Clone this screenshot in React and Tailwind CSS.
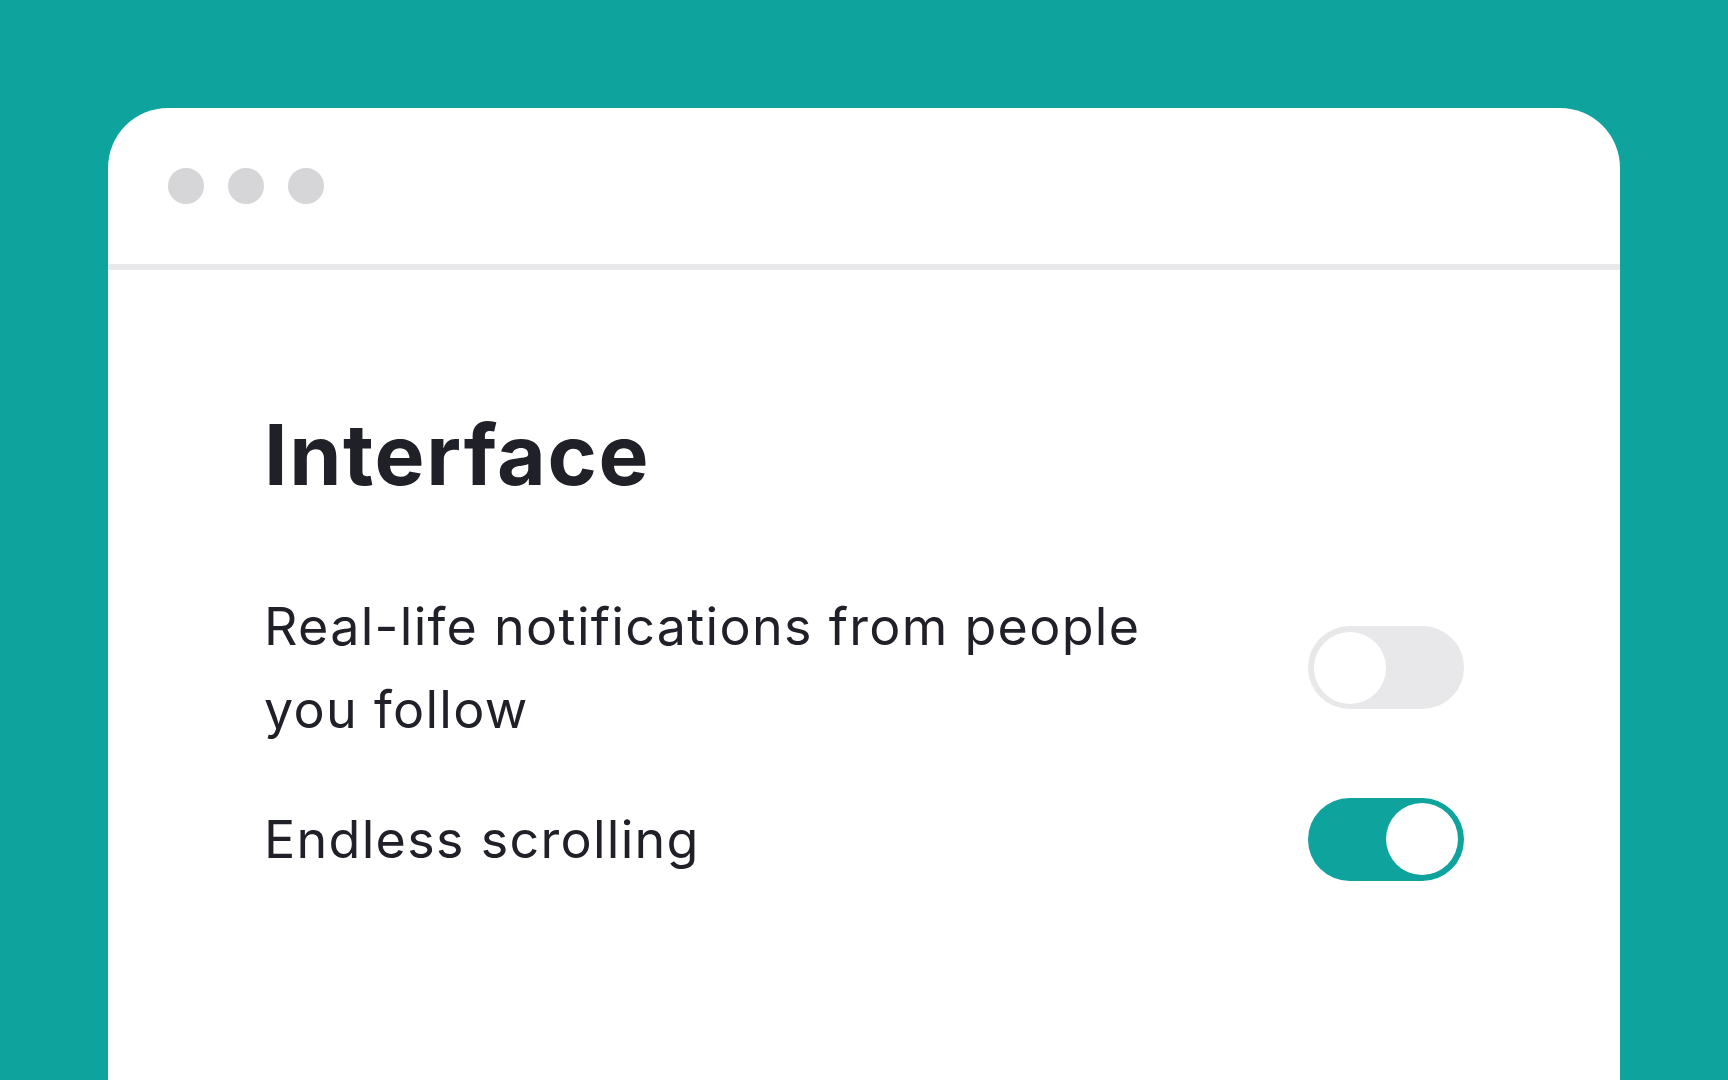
import React, { useState } from "react";

const Toggle = ({ on, onChange }) => {
  return (
    <button
      type="button"
      onClick={onChange}
      className={`flex h-[83px] w-[156px] shrink-0 items-center rounded-full p-[6px] ${
        on ? "justify-end bg-[#0fa39e]" : "justify-start bg-[#e8e8ea]"
      }`}
    >
      <span className="block h-[72px] w-[72px] rounded-full bg-white" />
    </button>
  );
};

export default function App() {
  const [realLife, setRealLife] = useState(false);
  const [endless, setEndless] = useState(true);

  return (
    <div
      className="flex h-screen flex-col overflow-hidden bg-[#0fa39e] px-[108px] pt-[108px]"
      style={{ fontFamily: "Inter, 'Noto Sans', sans-serif" }}
    >
      <div className="flex flex-1 flex-col rounded-t-[60px] bg-white">
        {/* window bar */}
        <div className="flex h-[156px] items-center gap-[24px] pl-[60px]">
          <span className="h-[36px] w-[36px] rounded-full bg-[#d6d6d9]" />
          <span className="h-[36px] w-[36px] rounded-full bg-[#d6d6d9]" />
          <span className="h-[36px] w-[36px] rounded-full bg-[#d6d6d9]" />
        </div>
        <div className="h-[6px] bg-[#e8e8ea]" />

        <div className="px-[156px] pt-[135px] text-[#202028]">
          <h1 className="text-[84px] font-bold leading-[1.2] tracking-[0.019em]">
            Interface
          </h1>

          <div className="mt-[79px] flex flex-col gap-[47px]">
            <div className="flex items-center justify-between">
              <p className="max-w-[910px] text-[52px] leading-[83px] tracking-[0.025em]">
                Real-life notifications from people you follow
              </p>
              <Toggle on={realLife} onChange={() => setRealLife(!realLife)} />
            </div>
            <div className="flex items-center justify-between">
              <p className="text-[52px] leading-[83px] tracking-[0.025em]">
                Endless scrolling
              </p>
              <Toggle on={endless} onChange={() => setEndless(!endless)} />
            </div>
          </div>
        </div>
      </div>
    </div>
  );
}
